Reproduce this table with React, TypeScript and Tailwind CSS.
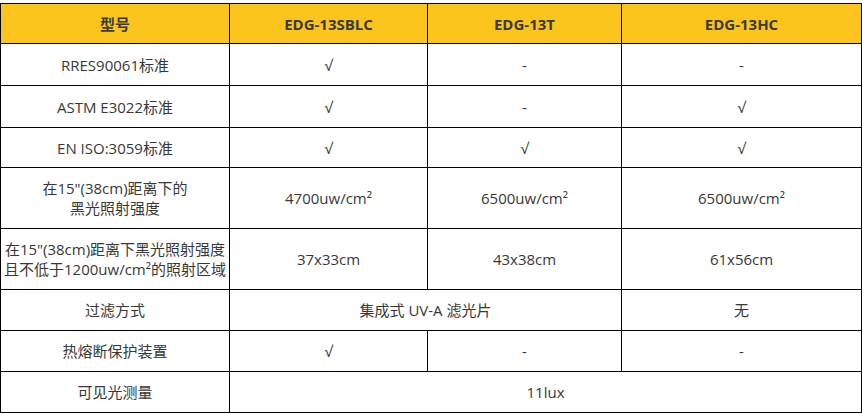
const font = { fontFamily: '"Open Sans", "Noto Sans CJK SC", sans-serif' };

type Cell = { text: React.ReactNode; span?: number };
type Row = { h: string; label: React.ReactNode; cells: Cell[]; tight?: boolean };

const rows: Row[] = [
	{ h: "h-[42px]", label: "RRES90061标准", cells: [{ text: "√" }, { text: "-" }, { text: "-" }] },
	{ h: "h-[42px]", label: "ASTM E3022标准", cells: [{ text: "√" }, { text: "-" }, { text: "√" }] },
	{ h: "h-[40px]", label: "EN ISO:3059标准", cells: [{ text: "√" }, { text: "√" }, { text: "√" }] },
	{
		h: "h-[61px]",
		label: (
			<>
				在15"(38cm)距离下的
				<br />
				黑光照射强度
			</>
		),
		cells: [
			{ text: <>4700uw/cm²</> },
			{ text: <>6500uw/cm²</> },
			{ text: <>6500uw/cm²</> },
		],
	},
	{
		h: "h-[61px]",
		tight: true,
		label: (
			<>
				在15"(38cm)距离下黑光照射强度
				<br />
				且不低于1200uw/cm²的照射区域
			</>
		),
		cells: [{ text: "37x33cm" }, { text: "43x38cm" }, { text: "61x56cm" }],
	},
	{ h: "h-[41px]", label: "过滤方式", cells: [{ text: "集成式 UV-A 滤光片", span: 2 }, { text: "无" }] },
	{ h: "h-[41px]", label: "热熔断保护装置", cells: [{ text: "√" }, { text: "-" }, { text: "-" }] },
	{ h: "h-[41px]", label: "可见光测量", cells: [{ text: "11lux", span: 3 }] },
];

export default function App() {
	return (
		<div className="bg-white w-[862px] h-[414px] pt-[3px]" style={font}>
			<table className="table-fixed border-collapse w-[861px] text-[15px] leading-[20px] text-[#383838]">
				<colgroup>
					<col className="w-[229px]" />
					<col className="w-[198px]" />
					<col className="w-[194px]" />
					<col className="w-[240px]" />
				</colgroup>
				<thead>
					<tr className="h-[40px] bg-[#fbc51e]">
						{["型号", "EDG-13SBLC", "EDG-13T", "EDG-13HC"].map((t) => (
							<th key={t} className="border border-black text-center font-bold text-[#3a3a3a] p-0">
								{t}
							</th>
						))}
					</tr>
				</thead>
				<tbody>
					{rows.map((r, i) => (
						<tr key={i} className={r.h}>
							<td
								className={
									r.tight
										? "border border-black text-center p-0 whitespace-nowrap overflow-hidden"
										: "border border-black text-center p-0"
								}
							>
								{r.label}
							</td>
							{r.cells.map((c, j) => (
								<td key={j} colSpan={c.span} className="border border-black text-center p-0">
									{c.text}
								</td>
							))}
						</tr>
					))}
				</tbody>
			</table>
		</div>
	);
}
